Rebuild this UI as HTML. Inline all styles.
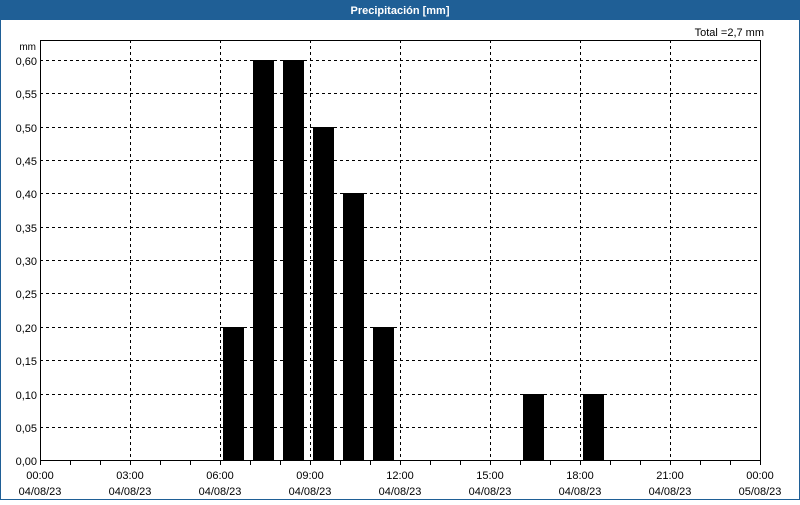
<!DOCTYPE html><html><head><style>body{margin:0;width:800px;height:500px;overflow:hidden;background:#fff}</style></head><body>
<svg width="800" height="500" xmlns="http://www.w3.org/2000/svg" font-family="Liberation Sans, sans-serif" font-size="11">
<rect x="0" y="0" width="800" height="500" fill="#1f5f96"/>
<rect x="1" y="20" width="798" height="479" fill="#fff"/>
<text x="400" y="14" fill="#fff" font-weight="bold" text-anchor="middle">Precipitación [mm]</text>
<text x="764" y="36" text-anchor="end" fill="#000">Total =2,7 mm</text>
<text x="36" y="50" text-anchor="end" font-size="10">mm</text>
<g stroke="#000" stroke-dasharray="3,3" stroke-width="1">
<path d="M130.5 40V460M220.5 40V460M310.5 40V460M400.5 40V460M490.5 40V460M580.5 40V460M670.5 40V460"/>
<path d="M40 60.5H760M40 93.5H760M40 127.5H760M40 160.5H760M40 193.5H760M40 227.5H760M40 260.5H760M40 293.5H760M40 327.5H760M40 360.5H760M40 394.5H760M40 427.5H760"/>
</g>
<g fill="#000">
<rect x="223" y="327" width="21" height="134"/>
<rect x="253" y="60" width="21" height="401"/>
<rect x="283" y="60" width="21" height="401"/>
<rect x="313" y="127" width="21" height="334"/>
<rect x="343" y="193" width="21" height="268"/>
<rect x="373" y="327" width="21" height="134"/>
<rect x="523" y="394" width="21" height="67"/>
<rect x="583" y="394" width="21" height="67"/>
</g>
<rect x="40.5" y="40.5" width="720" height="420" fill="none" stroke="#000"/>
<g stroke="#000"><path d="M40.5 461v4M70.5 461v4M100.5 461v4M130.5 461v4M160.5 461v4M190.5 461v4M220.5 461v4M250.5 461v4M280.5 461v4M310.5 461v4M340.5 461v4M370.5 461v4M400.5 461v4M430.5 461v4M460.5 461v4M490.5 461v4M520.5 461v4M550.5 461v4M580.5 461v4M610.5 461v4M640.5 461v4M670.5 461v4M700.5 461v4M730.5 461v4M760.5 461v4"/></g>
<g text-anchor="end">
<text x="37" y="65">0,60</text><text x="37" y="98">0,55</text><text x="37" y="132">0,50</text><text x="37" y="165">0,45</text><text x="37" y="198">0,40</text><text x="37" y="232">0,35</text><text x="37" y="265">0,30</text><text x="37" y="298">0,25</text><text x="37" y="332">0,20</text><text x="37" y="365">0,15</text><text x="37" y="399">0,10</text><text x="37" y="432">0,05</text><text x="37" y="465">0,00</text>
</g>
<g text-anchor="middle">
<text x="40" y="479">00:00</text><text x="40" y="495">04/08/23</text>
<text x="130" y="479">03:00</text><text x="130" y="495">04/08/23</text>
<text x="220" y="479">06:00</text><text x="220" y="495">04/08/23</text>
<text x="310" y="479">09:00</text><text x="310" y="495">04/08/23</text>
<text x="400" y="479">12:00</text><text x="400" y="495">04/08/23</text>
<text x="490" y="479">15:00</text><text x="490" y="495">04/08/23</text>
<text x="580" y="479">18:00</text><text x="580" y="495">04/08/23</text>
<text x="670" y="479">21:00</text><text x="670" y="495">04/08/23</text>
<text x="760" y="479">00:00</text><text x="760" y="495">05/08/23</text>
</g>
</svg></body></html>
